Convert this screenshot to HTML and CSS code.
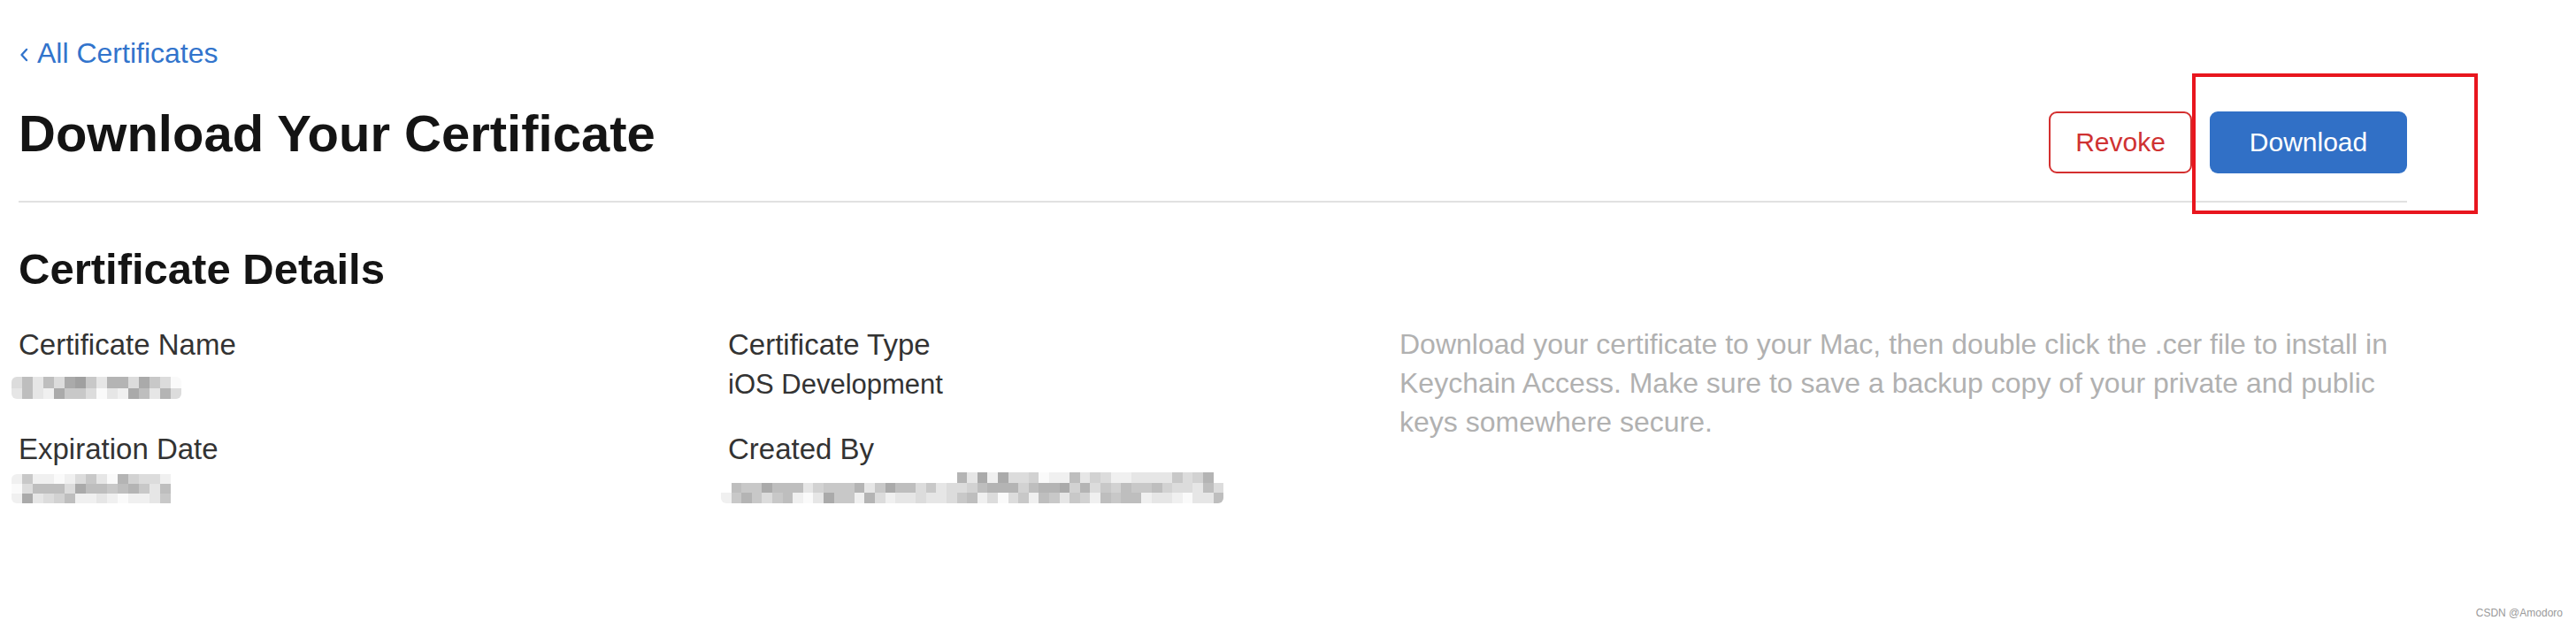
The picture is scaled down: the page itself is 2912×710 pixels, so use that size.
FILE: index.html
```html
<!DOCTYPE html>
<html lang="en">

<head>
  <meta charset="UTF-8" />
  <meta name="viewport" content="width=device-width, initial-scale=1.0" />
  <title>Download Your Certificate</title>
  <link rel="stylesheet" href="styles.css">
</head>

<body>
  <div class="page">
    <a class="back-link" href="#">
      <svg class="back-icon" width="12" height="18" viewBox="0 0 12 18">
        <path d="M9 3 L3.5 9 L9 15" fill="none" stroke="currentColor" stroke-width="2.4" stroke-linecap="round" stroke-linejoin="round" />
      </svg>
      <span>All Certificates</span>
    </a>

    <div class="page-header">
      <h1 class="page-title">Download Your Certificate</h1>
      <div class="actions">
        <button class="btn btn-revoke">Revoke</button>
        <button class="btn btn-download">Download</button>
      </div>
    </div>

    <h2 class="section-title">Certificate Details</h2>

    <div class="details">
      <div class="col">
        <div class="field">
          <div class="field-label">Certificate Name</div>
          <div class="field-value">
            <div class="mosaic mosaic-name" data-rows="3626389527738530|2621855302186273"></div>
          </div>
        </div>
        <div class="field">
          <div class="field-label">Expiration Date</div>
          <div class="field-value">
            <div class="mosaic mosaic-date" data-rows="151101352074331.|036663866567526.|182346112101125"></div>
          </div>
        </div>
      </div>

      <div class="col">
        <div class="field">
          <div class="field-label">Certificate Type</div>
          <div class="field-value">iOS Development</div>
        </div>
        <div class="field">
          <div class="field-label">Created By</div>
          <div class="field-value">
            <div class="mosaic mosaic-owner" data-rows=".......................7281833401162431122225347.|.655866624555725866352334677746778473546556433263|1575356102855173122322356130351652541656612210226"></div>
          </div>
        </div>
      </div>

      <div class="col col-note">
        <p class="note">Download your certificate to your Mac, then double click the .cer file to install in Keychain Access. Make sure to save a backup copy of your private and public keys somewhere secure.</p>
      </div>
    </div>
  </div>

  <!-- annotation box drawn over the screenshot -->
  <div class="highlight"></div>
  <div class="watermark">CSDN @Amodoro</div>

  <script src="script.js"></script>
</body>

</html>
```

FILE: styles.css
```css
* {
  margin: 0;
  padding: 0;
  box-sizing: border-box;
}

html,
body {
  width: 100%;
  height: 100%;
}

body {
  position: relative;
  background: #fff;
  font-family: "Liberation Sans", Arial, sans-serif;
  color: #333;
  overflow: hidden;
}

.page {
  padding: 40px 191px 0 21px;
}

.back-link {
  display: inline-flex;
  align-items: center;
  gap: 9px;
  height: 40px;
  font-size: 32px;
  line-height: 40px;
  color: #3274cc;
  text-decoration: none;
}

.back-icon {
  margin-top: 3px;
}

.page-header {
  display: flex;
  justify-content: space-between;
  align-items: flex-start;
  margin-top: 42px;
  padding-bottom: 31px;
  border-bottom: 2px solid #e1e1e1;
}

.page-title {
  font-size: 58px;
  line-height: 58px;
  font-weight: bold;
  color: #141414;
}

.actions {
  display: flex;
  gap: 20px;
  margin-top: 4px;
}

.btn {
  display: flex;
  align-items: center;
  justify-content: center;
  height: 70px;
  border-radius: 9px;
  font-family: inherit;
  font-size: 30px;
  cursor: pointer;
}

.btn-revoke {
  width: 162px;
  background: #fff;
  border: 2px solid #d42f2f;
  color: #cf3232;
}

.btn-download {
  width: 223px;
  background: #3170c6;
  border: none;
  color: #fff;
}

.section-title {
  margin-top: 51px;
  font-size: 49px;
  line-height: 49px;
  font-weight: bold;
  color: #141414;
}

.details {
  display: grid;
  grid-template-columns: 802px 759px 1fr;
  margin-top: 38px;
}

.field {
  margin-bottom: 28px;
}

.field-label,
.field-value {
  height: 45px;
  font-size: 32px;
  line-height: 45px;
  color: #333;
}

.field-label {
  font-size: 33px;
}

.field-value {
  font-size: 31px;
}

.note {
  font-size: 32px;
  line-height: 44px;
  color: #b1b1b1;
}

/* pixelated (blurred out) values */
.mosaic {
  display: inline-block;
  border-radius: 6px;
  overflow: hidden;
  margin-left: -8px;
}

.mosaic-row {
  display: flex;
}

.mosaic .px {
  display: block;
}

.mosaic-name {
  margin-top: 14px;
}

.mosaic-name .px {
  width: 12px;
  height: 12.5px;
}

.mosaic-date {
  margin-top: 6px;
}

.mosaic-date .px {
  width: 12px;
  height: 11px;
}

.mosaic-owner {
  margin-top: 4px;
}

.mosaic-owner .px {
  width: 11.6px;
  height: 11.7px;
}

.c0 { background: #fafafa; }
.c1 { background: #f0f0f0; }
.c2 { background: #e6e6e6; }
.c3 { background: #dcdcdc; }
.c4 { background: #d2d2d2; }
.c5 { background: #c8c8c8; }
.c6 { background: #bebebe; }
.c7 { background: #b4b4b4; }
.c8 { background: #aaaaaa; }
.c9 { background: #a0a0a0; }

.highlight {
  position: absolute;
  left: 2478px;
  top: 83px;
  width: 323px;
  height: 159px;
  border: 4px solid #e8161e;
}

.watermark {
  position: absolute;
  right: 15px;
  top: 686px;
  font-size: 12px;
  color: #9a9a9a;
}
```

FILE: script.js
```js
// build the pixel blocks that hide the private values
document.querySelectorAll(".mosaic").forEach(function (el) {
  el.dataset.rows.split("|").forEach(function (row) {
    var line = document.createElement("div");
    line.className = "mosaic-row";
    for (var i = 0; i < row.length; i++) {
      var cell = document.createElement("span");
      cell.className = row[i] === "." ? "px" : "px c" + row[i];
      line.appendChild(cell);
    }
    el.appendChild(line);
  });
});
```
